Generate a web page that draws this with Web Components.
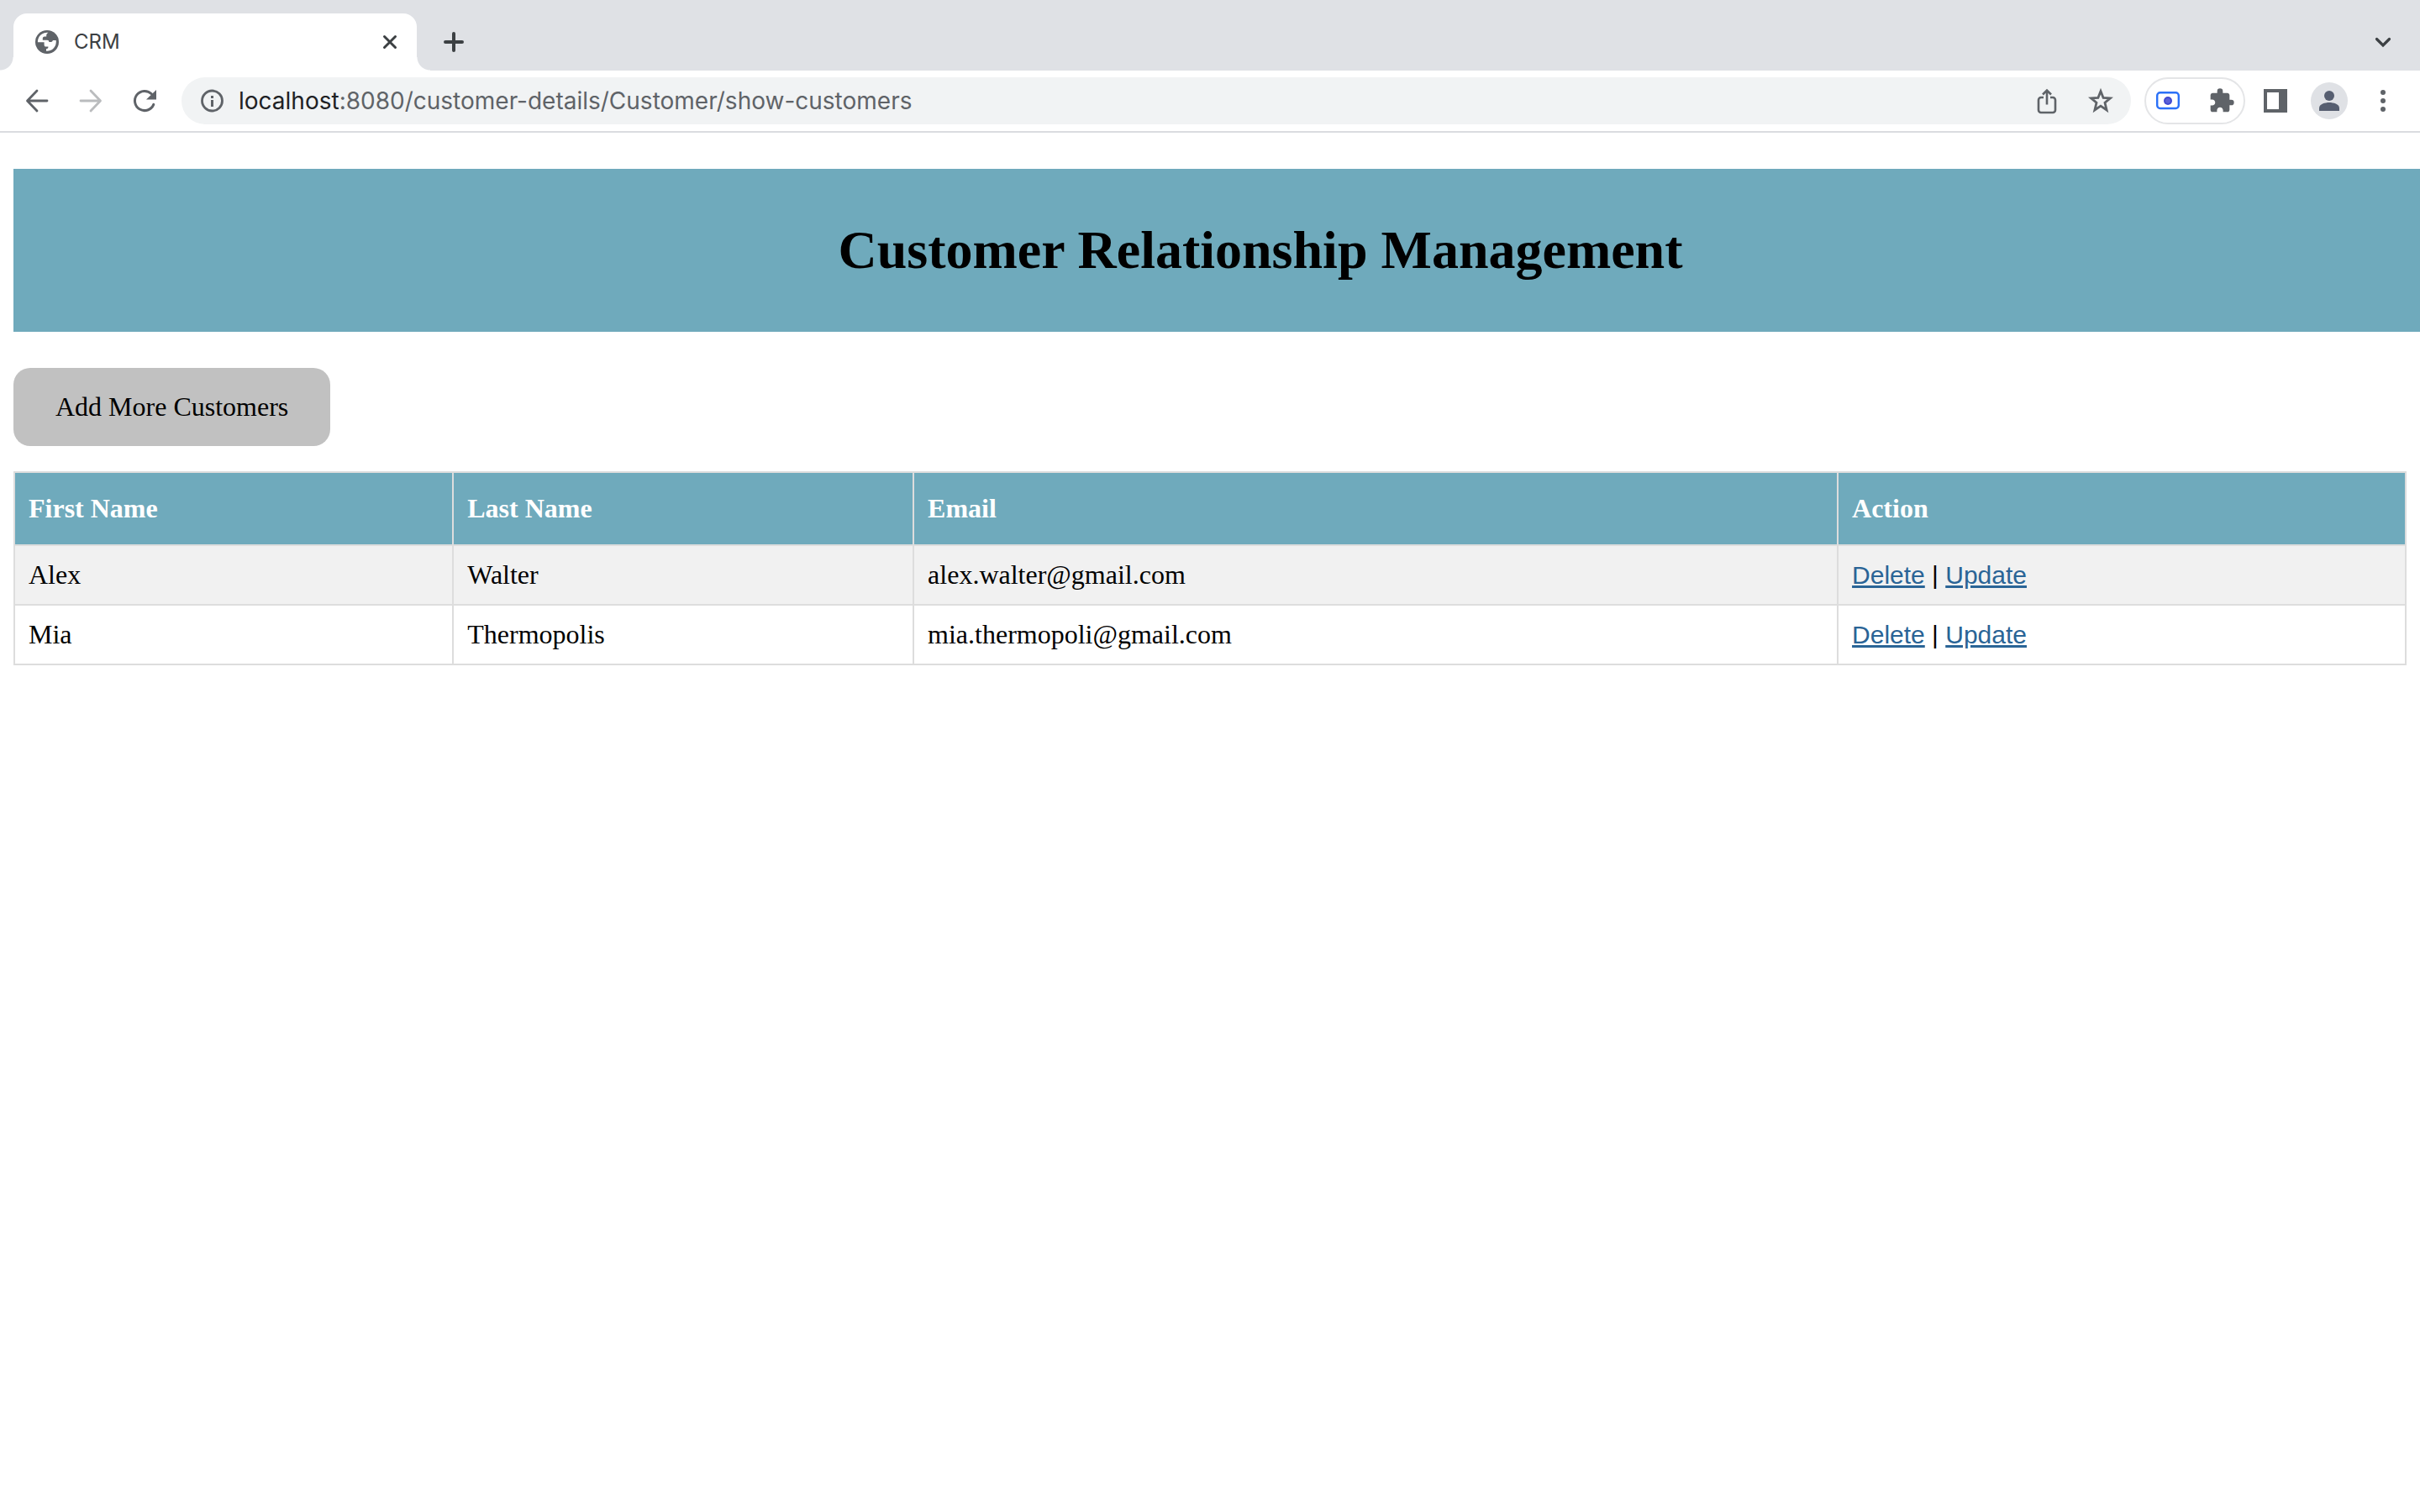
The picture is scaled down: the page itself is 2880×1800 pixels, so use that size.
<!DOCTYPE html>
<html lang="en">
<head>
<meta charset="utf-8">
<title>CRM</title>
<style>
body { margin: 0; background: #fff; color: #000; font: 32px/37px "Liberation Serif", "Times New Roman", serif; overflow-x: hidden; }
</style>
</head>
<body>
<browser-window>
  <browser-tab slot="tabs">CRM</browser-tab>
  <address-bar slot="address" host="localhost" path=":8080/customer-details/Customer/show-customers"></address-bar>
  <crm-page></crm-page>
</browser-window>
<script>
const icon = (size, body) => `<svg width="${size}" height="${size}" viewBox="0 0 ${size} ${size}" fill="none" aria-hidden="true">${body}</svg>`;

class BaseElement extends HTMLElement {
  connectedCallback() {
    if (this.shadowRoot) return;
    this.attachShadow({ mode: "open" }).innerHTML = `
      <style>
        :host, *, *::before, *::after { box-sizing: border-box; }
        button { border: 0; padding: 0; background: none; font: inherit; color: inherit; }
        svg { display: block; flex: none; }
        ${this.styles()}
      </style>${this.markup()}`;
  }
}

customElements.define("browser-tab", class extends BaseElement {
  styles() { return `
    :host { display: flex; align-items: center; position: relative; width: 480px; height: 68px; padding: 0 22px 0 24px; border-radius: 16px 16px 0 0; background: #fff; color: #3c4043; font: 24px/32px Inter, sans-serif; }
    :host::before, :host::after { content: ""; position: absolute; bottom: 0; width: 16px; height: 16px; }
    :host::before { right: 100%; background: radial-gradient(circle at 0 0, transparent 15px, #fff 16px); }
    :host::after { left: 100%; background: radial-gradient(circle at 100% 0, transparent 15px, #fff 16px); }
    .title { flex: 1; margin-left: 16px; }
  `; }
  markup() { return `
    ${icon(32, '<circle cx="16" cy="16" r="14" fill="#5f6368"/><path fill="#fff" d="M17.500 4.800c-1.500 1-2.300 2-2.300 3.400v1.300h-2.100c-1.600 0-2.300 1-2.300 2.400v1.800h5.200c1.600 0 2.300.9 2.300 2.200h2.500c1.200 0 2-.6 2-1.800h3.900A11 11 0 0 1 15 26.800v-2.500c1.700 0 2.400-.9 2.400-2.200v-.6h-2.600c-1.500 0-2.200-.9-2.200-2.300v-3H4.900A11 11 0 0 1 17.500 4.800z"/>')}
    <span class="title"><slot></slot></span>
    <button aria-label="Close tab">${icon(20, '<path d="M3.500 3.500l13 13M16.500 3.500l-13 13" stroke="#3c4043" stroke-width="3" stroke-linecap="round"/>')}</button>
  `; }
});

customElements.define("address-bar", class extends BaseElement {
  styles() { return `
    :host { display: flex; align-items: center; flex: 1; height: 56px; padding: 0 20px; border-radius: 28px; background: #f1f3f4; color: #5f6368; font: 28px/36px Inter, sans-serif; }
    .url { flex: 1; margin-left: 16px; white-space: nowrap; }
    .host { color: #202124; }
    .actions { display: flex; gap: 32px; }
  `; }
  markup() { return `
    <button aria-label="Site information">${icon(32, '<circle cx="16.500" cy="16" r="12" stroke="#5f6368" stroke-width="2.800"/><path d="M16.500 15v8M16.500 10v3" stroke="#5f6368" stroke-width="3"/>')}</button>
    <div class="url"><span class="host">${this.getAttribute("host")}</span>${this.getAttribute("path")}</div>
    <div class="actions">
      <button aria-label="Share">${icon(32, '<path d="M12 12H9a3 3 0 0 0-3 3v12a3 3 0 0 0 3 3h14a3 3 0 0 0 3-3V15a3 3 0 0 0-3-3h-3M16 20.500V4.500M11 8.500l5-5 5 5" stroke="#5f6368" stroke-width="2.600"/>')}</button>
      <button aria-label="Bookmark">${icon(32, '<path d="M16 4.500l3.100 7.900 8.300.5-6.400 5.400 2.100 8.700-7.100-4.800-7.100 4.800 2.100-8.700-6.400-5.400 8.300-.5z" stroke="#5f6368" stroke-width="2.800"/>')}</button>
    </div>
  `; }
});

customElements.define("browser-window", class extends BaseElement {
  styles() { return `
    :host { display: block; }
    .strip { display: flex; align-items: center; height: 84px; padding: 16px 28px 0 16px; background: #dfe1e5; }
    .new { margin-left: 32px; }
    .search { margin-left: auto; }
    .bar { display: flex; align-items: center; height: 74px; padding: 0 28px; border-bottom: 2px solid #dadce0; background: #fff; }
    .nav { display: flex; gap: 32px; margin-right: 28px; }
    .ext { display: flex; align-items: center; gap: 32px; width: 120px; height: 56px; margin-left: 16px; padding: 0 10px; border: 2px solid #e4e5e7; border-radius: 28px; }
    .tools { display: flex; align-items: center; margin-left: 20px; }
    .profile { display: flex; align-items: center; justify-content: center; width: 44px; height: 44px; margin: 0 26px; border-radius: 50%; background: #dfe1e5; }
  `; }
  markup() {
    const c = "#5f6368";
    return `
    <div class="strip">
      <slot name="tabs"></slot>
      <button class="new" aria-label="New tab">${icon(24, '<path d="M12 2v20M2 12h20" stroke="#3c4043" stroke-width="4" stroke-linecap="round"/>')}</button>
      <button class="search" aria-label="Search tabs">${icon(32, '<path d="M8.500 12.500L16 20l7.500-7.500" stroke="#3c4043" stroke-width="3.200" stroke-linecap="round"/>')}</button>
    </div>
    <div class="bar">
      <div class="nav">
        <button aria-label="Back">${icon(32, `<path d="M28 16H5M16 4L4.500 16 16 28" stroke="${c}" stroke-width="2.800" stroke-linecap="round" stroke-linejoin="round"/>`)}</button>
        <button aria-label="Forward">${icon(32, '<path d="M4 16h23M16 4l11.500 12L16 28" stroke="#babcbe" stroke-width="2.800" stroke-linecap="round" stroke-linejoin="round"/>')}</button>
        <button aria-label="Reload">${icon(32, `<path d="M24.300 7.800A11.600 11.600 0 1 0 26.800 20.400" stroke="${c}" stroke-width="3" stroke-linecap="round"/><path d="M30 3v11.500H18z" fill="${c}"/>`)}</button>
      </div>
      <slot name="address"></slot>
      <div class="ext">
        <button aria-label="Recorder">${icon(32, '<rect x="3.200" y="6.200" width="25.600" height="18.800" rx="3.500" stroke="#2a70f8" stroke-width="2.400"/><circle cx="16" cy="16" r="5" fill="#4049d0"/><circle cx="16" cy="16" r="3" fill="#5a60d6"/>')}</button>
        <button aria-label="Extensions">${icon(32, `<path transform="scale(1.3333)" fill="${c}" d="M20.500 11H19V7c0-1.100-.9-2-2-2h-4V3.500a2.500 2.500 0 0 0-5 0V5H4c-1.100 0-2 .9-2 2v3.800h1.500c1.500 0 2.700 1.200 2.700 2.700S5 16.200 3.500 16.200H2V20c0 1.100.9 2 2 2h3.800v-1.500c0-1.500 1.200-2.700 2.700-2.700s2.700 1.200 2.700 2.700V22H17c1.100 0 2-.9 2-2v-4h1.500a2.500 2.500 0 0 0 0-5z"/>`)}</button>
      </div>
      <div class="tools">
        <button aria-label="Side panel">${icon(32, `<path fill="${c}" fill-rule="evenodd" d="M2 2h28v28H2zM6 6v20h14V6z"/>`)}</button>
        <button class="profile" aria-label="Profile">${icon(32, '<circle cx="16" cy="10" r="6" fill="#565e70"/><path fill="#565e70" d="M4 28v-3.500C4 20 11 18 16 18s12 2 12 6.500V28z"/>')}</button>
        <button aria-label="Menu">${icon(32, `<circle cx="16" cy="6" r="3" fill="${c}"/><circle cx="16" cy="16" r="3" fill="${c}"/><circle cx="16" cy="26" r="3" fill="${c}"/>`)}</button>
      </div>
    </div>
    <slot></slot>`;
  }
});

customElements.define("crm-banner", class extends BaseElement {
  styles() { return `
    :host { display: block; padding: 60px; background: #6faabc; text-align: center; }
    h1 { margin: 0; font-size: 64px; line-height: 74px; font-weight: bold; }
  `; }
  markup() { return `<h1><slot></slot></h1>`; }
});

customElements.define("customer-table", class extends BaseElement {
  styles() { return `
    :host { display: block; }
    table { width: 100%; border-collapse: collapse; table-layout: fixed; }
    th, td { padding: 16px; border: 2px solid #ddd; text-align: left; }
    th { padding: 24px 16px; background: #6faabc; color: #fff; }
    tbody tr:nth-child(odd) { background: #f1f1f1; }
    .first { width: 18.35%; } .last { width: 19.25%; } .email { width: 38.65%; }
    .action { font-family: "Liberation Sans", Arial, sans-serif; font-size: 30px; }
    a { color: #2a6496; text-underline-offset: 2px; text-decoration-thickness: 3px; }
  `; }
  markup() {
    const rows = [["Alex", "Walter", "alex.walter@gmail.com"], ["Mia", "Thermopolis", "mia.thermopoli@gmail.com"]];
    return `<table>
      <thead><tr><th class="first">First Name</th><th class="last">Last Name</th><th class="email">Email</th><th>Action</th></tr></thead>
      <tbody>${rows.map(r => `<tr>${r.map(v => `<td>${v}</td>`).join("")}<td class="action"><a href="#delete">Delete</a> | <a href="#update">Update</a></td></tr>`).join("")}</tbody>
    </table>`;
  }
});

customElements.define("crm-page", class extends BaseElement {
  styles() { return `
    :host { display: block; padding: 43px 16px 16px; overflow: hidden; }
    crm-banner { box-sizing: content-box; width: 100%; }
    .add { display: block; margin: 43px 0 30px; padding: 28px 50px; border-radius: 20px; background: #c1c1c1; }
  `; }
  markup() { return `
    <crm-banner>Customer Relationship Management</crm-banner>
    <button class="add">Add More Customers</button>
    <customer-table></customer-table>
  `; }
});
</script>
</body>
</html>
